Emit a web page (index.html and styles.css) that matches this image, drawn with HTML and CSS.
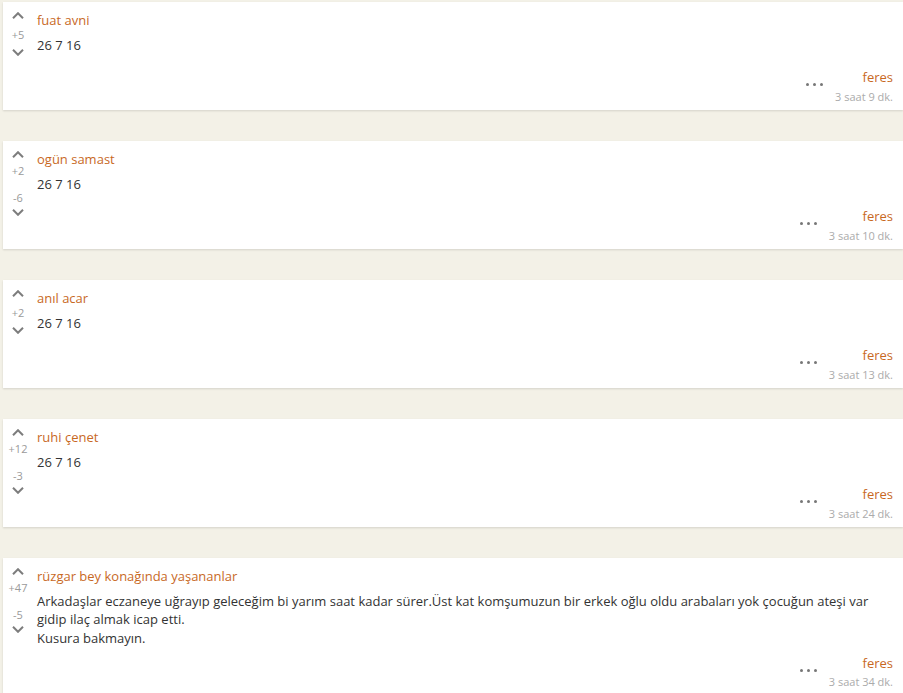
FILE: index.html
```html
<!DOCTYPE html>
<html lang="tr">
<head>
<meta charset="utf-8">
<title>entries</title>
<link rel="stylesheet" href="styles.css">
</head>
<body>
<div class="feed">

  <article class="entry">
    <div class="vote vote--single">
      <button class="vote-btn" aria-label="up"><svg width="12" height="7" viewBox="0 0 12 7"><polyline points="1,6.2 6,1.2 11,6.2"/></svg></button>
      <span class="score score-up">+5</span>
      <button class="vote-btn vote-btn--down" aria-label="down"><svg width="12" height="7" viewBox="0 0 12 7"><polyline points="1,0.8 6,5.8 11,0.8"/></svg></button>
    </div>
    <div class="entry-main">
      <a class="topic" href="#">fuat avni</a>
      <div class="entry-body">26 7 16</div>
      <footer class="entry-footer">
        <span class="dots"><i></i><i></i><i></i></span>
        <div class="meta"><a class="author" href="#">feres</a><span class="time">3 saat 9 dk.</span></div>
      </footer>
    </div>
  </article>

  <article class="entry">
    <div class="vote">
      <button class="vote-btn" aria-label="up"><svg width="12" height="7" viewBox="0 0 12 7"><polyline points="1,6.2 6,1.2 11,6.2"/></svg></button>
      <span class="score score-up">+2</span>
      <span class="score score-down">-6</span>
      <button class="vote-btn vote-btn--down" aria-label="down"><svg width="12" height="7" viewBox="0 0 12 7"><polyline points="1,0.8 6,5.8 11,0.8"/></svg></button>
    </div>
    <div class="entry-main">
      <a class="topic" href="#">ogün samast</a>
      <div class="entry-body">26 7 16</div>
      <footer class="entry-footer">
        <span class="dots"><i></i><i></i><i></i></span>
        <div class="meta"><a class="author" href="#">feres</a><span class="time">3 saat 10 dk.</span></div>
      </footer>
    </div>
  </article>

  <article class="entry">
    <div class="vote vote--single">
      <button class="vote-btn" aria-label="up"><svg width="12" height="7" viewBox="0 0 12 7"><polyline points="1,6.2 6,1.2 11,6.2"/></svg></button>
      <span class="score score-up">+2</span>
      <button class="vote-btn vote-btn--down" aria-label="down"><svg width="12" height="7" viewBox="0 0 12 7"><polyline points="1,0.8 6,5.8 11,0.8"/></svg></button>
    </div>
    <div class="entry-main">
      <a class="topic" href="#">anıl acar</a>
      <div class="entry-body">26 7 16</div>
      <footer class="entry-footer">
        <span class="dots"><i></i><i></i><i></i></span>
        <div class="meta"><a class="author" href="#">feres</a><span class="time">3 saat 13 dk.</span></div>
      </footer>
    </div>
  </article>

  <article class="entry">
    <div class="vote">
      <button class="vote-btn" aria-label="up"><svg width="12" height="7" viewBox="0 0 12 7"><polyline points="1,6.2 6,1.2 11,6.2"/></svg></button>
      <span class="score score-up">+12</span>
      <span class="score score-down">-3</span>
      <button class="vote-btn vote-btn--down" aria-label="down"><svg width="12" height="7" viewBox="0 0 12 7"><polyline points="1,0.8 6,5.8 11,0.8"/></svg></button>
    </div>
    <div class="entry-main">
      <a class="topic" href="#">ruhi çenet</a>
      <div class="entry-body">26 7 16</div>
      <footer class="entry-footer">
        <span class="dots"><i></i><i></i><i></i></span>
        <div class="meta"><a class="author" href="#">feres</a><span class="time">3 saat 24 dk.</span></div>
      </footer>
    </div>
  </article>

  <article class="entry">
    <div class="vote">
      <button class="vote-btn" aria-label="up"><svg width="12" height="7" viewBox="0 0 12 7"><polyline points="1,6.2 6,1.2 11,6.2"/></svg></button>
      <span class="score score-up">+47</span>
      <span class="score score-down">-5</span>
      <button class="vote-btn vote-btn--down" aria-label="down"><svg width="12" height="7" viewBox="0 0 12 7"><polyline points="1,0.8 6,5.8 11,0.8"/></svg></button>
    </div>
    <div class="entry-main">
      <a class="topic" href="#">rüzgar bey konağında yaşananlar</a>
      <div class="entry-body">Arkadaşlar eczaneye uğrayıp geleceğim bi yarım saat kadar sürer.Üst kat komşumuzun bir erkek oğlu oldu arabaları yok çocuğun ateşi var gidip ilaç almak icap etti.<br>Kusura bakmayın.</div>
      <footer class="entry-footer">
        <span class="dots"><i></i><i></i><i></i></span>
        <div class="meta"><a class="author" href="#">feres</a><span class="time">3 saat 34 dk.</span></div>
      </footer>
    </div>
  </article>

</div>
</body>
</html>
```

FILE: styles.css
```css
html, body {
  margin: 0;
  padding: 0;
  overflow: hidden;
  background: #f3f1e7;
}

body {
  font-family: "Open Sans", "DejaVu Sans", sans-serif;
  font-size: 13px;
  line-height: 1.42857;
  color: #333;
}

.feed {
  padding: 2px 0 0 3px;
}

.entry {
  display: flex;
  background: #fff;
  box-shadow: 0 1px 2px rgba(0, 0, 0, 0.13);
  margin-bottom: 31px;
  padding: 8.5px 10px 3.5px 0;
}

/* vote column */
.vote {
  width: 30px;
  flex: none;
  display: flex;
  flex-direction: column;
  align-items: center;
  margin-top: 0.5px;
}

.vote-btn {
  display: flex;
  align-items: center;
  justify-content: center;
  width: 20px;
  height: 9px;
  padding: 0;
  border: 0;
  background: none;
  cursor: pointer;
}

.vote-btn svg {
  display: block;
  fill: none;
  stroke: #7d7d7d;
  stroke-width: 2;
}

.score {
  font-size: 11px;
  line-height: 14px;
  color: #9a9a9a;
}

.score-up { margin-top: 5px; }
.score-down { margin-top: 13.3px; }
.vote-btn--down { margin-top: 2.4px; }

.vote--single .score-up { margin-top: 7.5px; }
.vote--single .vote-btn--down { margin-top: 6.2px; }

/* main content */
.entry-main {
  flex: 1;
  min-width: 0;
  margin-left: 4px;
  display: flex;
  flex-direction: column;
}

.topic {
  color: #c8691f;
  text-decoration: none;
  align-self: flex-start;
}

.entry-body {
  margin-top: 6.5px;
  min-height: 26.3px;
  color: #333;
}

.entry-footer {
  margin-top: 6.5px;
  display: flex;
  justify-content: flex-end;
  align-items: center;
  gap: 12px;
}

.dots {
  display: flex;
  gap: 4px;
  margin-bottom: 5px;
}

.dots i {
  display: block;
  width: 3px;
  height: 3px;
  border-radius: 50%;
  background: #777;
}

.meta {
  display: flex;
  flex-direction: column;
  align-items: flex-end;
}

.author {
  color: #c8691f;
  text-decoration: none;
}

.time {
  font-size: 11px;
  line-height: 19.6px;
  color: #ababab;
}
```
